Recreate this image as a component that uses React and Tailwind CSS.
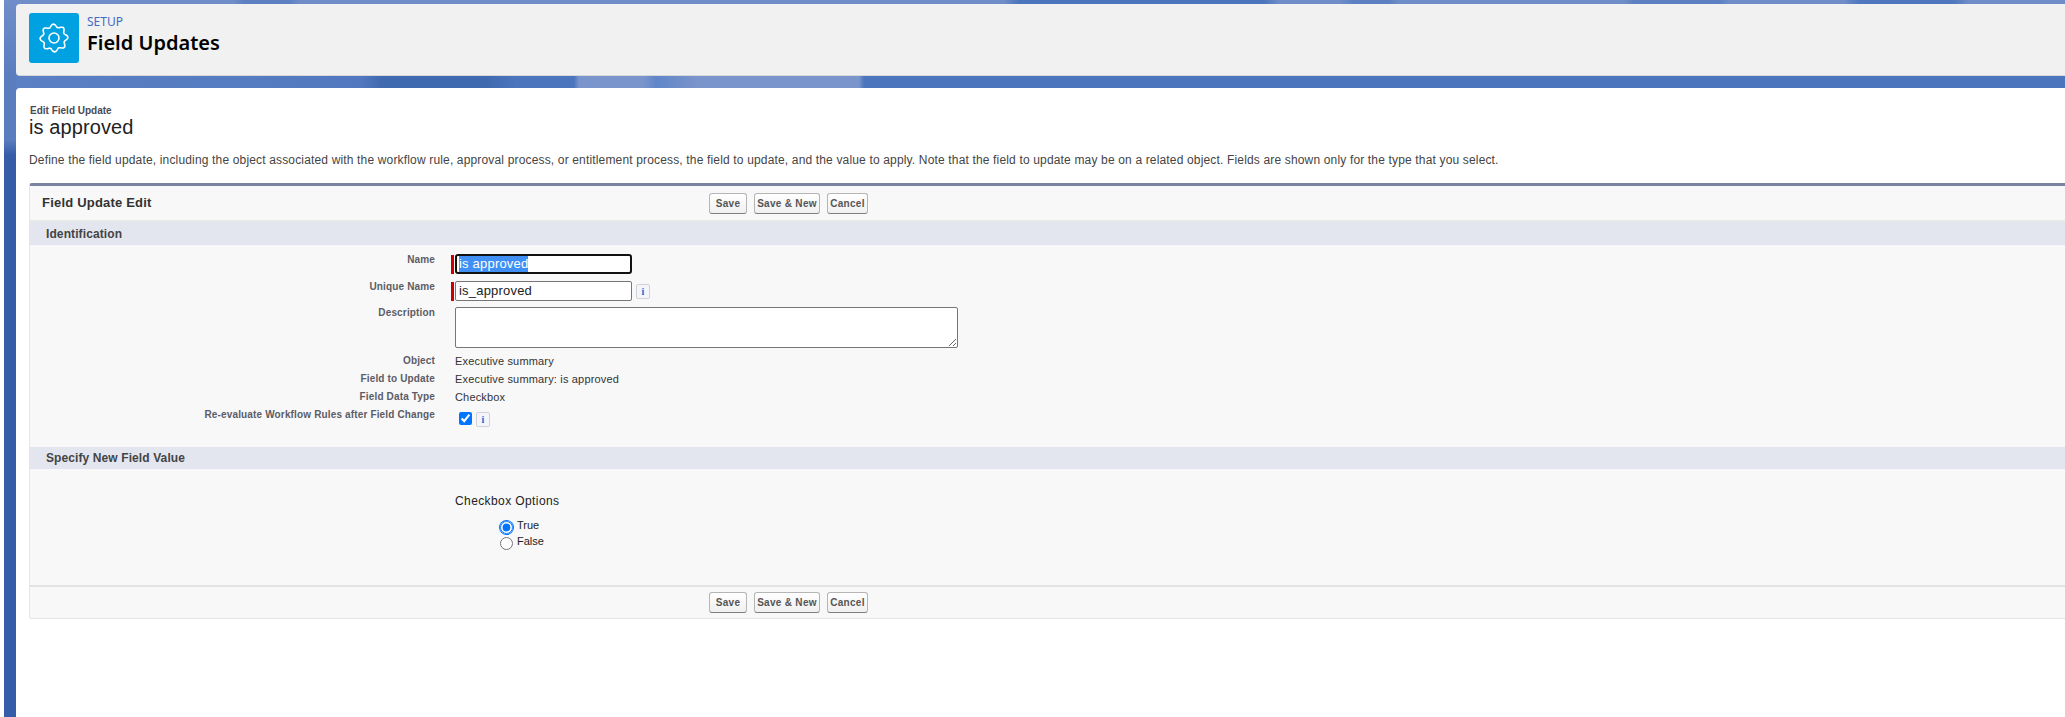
const gearPath = (() => {
  // 8 rounded teeth round the hub
  const pts = [];
  for (let i = 0; i < 160; i++) {
    const a = (i / 160) * Math.PI * 2;
    const r = 12.4 + 1.5 * Math.cos(8 * a + Math.PI / 8);
    pts.push(`${(25 + r * Math.cos(a)).toFixed(2)} ${(25 + r * Math.sin(a)).toFixed(2)}`);
  }
  return "M" + pts.join("L") + "Z";
})();

function GearTile() {
  return (
    <div className="w-[50px] h-[50px] rounded-[3px] bg-[#00a1e0] shrink-0">
      <svg viewBox="0 0 50 50" className="w-[50px] h-[50px]" fill="none" stroke="#fff" strokeWidth="1.6">
        <path d={gearPath} />
        <circle cx="25" cy="25" r="5" />
      </svg>
    </div>
  );
}

function InfoIcon() {
  return (
    <span className="flex items-center justify-center w-[14px] h-[15px] rounded-[2px] border border-[#cfd3d8] bg-[#f3f5f8] text-[#0a6fd8] text-[10px] font-bold font-['Liberation_Serif',serif] shrink-0">
      i
    </span>
  );
}

function Buttons() {
  return (
    <div className="flex gap-[7px] ml-[679px]">
      <Btn className="w-[38px]">Save</Btn>
      <Btn className="w-[66px]">Save &amp; New</Btn>
      <Btn className="w-[41px]">Cancel</Btn>
    </div>
  );
}

function Btn({ className, children }) {
  return (
    <button className={`h-[21px] rounded-[3px] border border-[#b5b5b5] border-b-[#7f7f7f] bg-gradient-to-b from-white to-[#f0f0f0] text-[10px] font-bold text-[#555] tracking-[0.3px] whitespace-nowrap ${className}`}>
      {children}
    </button>
  );
}

function Row({ label, className, children }) {
  return (
    <div className={`flex ${className}`}>
      <div className="w-[405px] text-right text-[10px] font-bold text-[#5c5c66] tracking-[0.15px] leading-[12px] shrink-0">
        {label}
      </div>
      {children}
    </div>
  );
}

function Required({ children }) {
  return (
    <div className="flex ml-[16px]">
      <div className="w-[3px] h-[19px] mt-[1px] bg-[#c00] mr-[1px]" />
      {children}
    </div>
  );
}

function ValueRow({ label, value }) {
  return (
    <Row label={label} className="h-[18px] items-center">
      <div className="ml-[20px] text-[11px] tracking-[0.17px] text-[#333]">{value}</div>
    </Row>
  );
}

function SectionBar({ className, children }) {
  return (
    <div className={`bg-[#e3e6ef] text-[12px] font-bold tracking-[0.1px] text-[#444] pl-[16px] flex items-center shrink-0 ${className}`}>
      {children}
    </div>
  );
}

export default function App() {
  return (
    <div className="min-h-[717px] bg-white pl-[4px] font-['Liberation_Sans',sans-serif]">
      <div className="min-h-[717px] pl-[12px] bg-[linear-gradient(180deg,#6f8dc8_0px,#5a7dc0_76px,#5a7dc0_140px,#365ca8_155px,#355ca8_100%)]">
        <div className="h-[4px] -ml-[12px] bg-[linear-gradient(90deg,#6f8dc8_0px,#6f8dc8_230px,#5c80c2_240px,#5c80c2_285px,#6f8dc8_295px,#6f8dc8_1000px,#4b76bd_1015px,#4b76bd_1260px,#6f8dc8_1275px,#6f8dc8_1335px,#5c80c2_1350px,#5c80c2_1385px,#6f8dc8_1395px,#6f8dc8_1620px,#5c80c2_1630px,#5c80c2_1715px,#6f8dc8_1725px,#6f8dc8_1840px,#5078be_1855px,#5078be_1950px,#6f8dc8_1965px)]" />
        <header className="h-[72px] rounded-tl-[4px] rounded-bl-[4px] bg-[#f1f1f1] border-b border-[#d8d8d8] flex items-start pl-[13px] pt-[9px]">
          <GearTile />
          <div className="ml-[8px]">
            <div className="text-[12px] leading-[14px] mt-[2px] text-[#3f6cc4] font-['Noto_Sans',sans-serif]">SETUP</div>
            <h1 className="text-[20px] leading-[26px] mt-[1px] font-semibold text-black font-['Noto_Sans',sans-serif]">Field Updates</h1>
          </div>
        </header>
        <div className="h-[12px] bg-[linear-gradient(90deg,#5b80c3_0px,#5279bf_345px,#3f6ab0_365px,#3f6ab0_470px,#4b76bd_500px,#4b76bd_558px,#7a94cc_563px,#7a94cc_628px,#5f86c8_640px,#7a94cc_680px,#7a94cc_843px,#4b76bd_848px)]" />

        <main className="min-h-[629px] bg-white rounded-tl-[4px] pt-[17px] pl-[13px]">
          <div className="pl-[1px] text-[10px] leading-[11px] font-bold text-[#4a4a56]">Edit Field Update</div>
          <h2 className="text-[20px] leading-[24px] tracking-[0.1px] text-[#222] mt-[-1px]">is approved</h2>
          <p className="mt-[13px] text-[12px] leading-[16px] tracking-[0.16px] text-[#444]">
            Define the field update, including the object associated with the workflow rule, approval process, or entitlement process, the field to update, and the value to apply. Note that the field to update may be on a related object. Fields are shown only for the type that you select.
          </p>

          <section className="mt-[15px] h-[436px] bg-[#f8f8f8] border-l border-b border-[#e6e6e6] border-t-[3px] border-t-[#7a84a0] rounded-tl-[3px] rounded-bl-[3px] flex flex-col">
            <div className="h-[36px] flex items-center border-b-2 border-[#e8e8e8] shrink-0 relative">
              <div className="absolute left-[12px] text-[13px] font-bold tracking-[0.2px] text-[#333]">Field Update Edit</div>
              <div className="mt-[1px]"><Buttons /></div>
            </div>
            <SectionBar className="h-[23px]">Identification</SectionBar>

            <div className="pt-[9px] shrink-0">
              <Row label="Name">
                <Required>
                  <div className="w-[177px] h-[20px] rounded-[3px] border-2 border-[#111] bg-white pl-[2px] flex items-center text-[13px] tracking-[0.2px]">
                    <span className="bg-[#3f8ff5] text-white leading-[16px]">is approved</span>
                  </div>
                </Required>
              </Row>
              <Row label="Unique Name" className="mt-[7px]">
                <Required>
                  <div className="w-[177px] h-[20px] rounded-[2px] border border-[#767676] bg-white pl-[3px] flex items-center text-[13px] tracking-[0.2px] text-[#222]">is_approved</div>
                  <div className="ml-[4px] mt-[3px]"><InfoIcon /></div>
                </Required>
              </Row>
              <Row label="Description" className="mt-[6px]">
                <textarea readOnly className="ml-[20px] w-[503px] h-[41px] rounded-[2px] border border-[#767676] bg-white block" />
              </Row>
              <div className="mt-[4px]">
                <ValueRow label="Object" value="Executive summary" />
                <ValueRow label="Field to Update" value="Executive summary: is approved" />
                <ValueRow label="Field Data Type" value="Checkbox" />
              </div>
              <Row label="Re-evaluate Workflow Rules after Field Change" className="mt-[3px]">
                <div className="ml-[24px] mt-[3px] flex items-start">
                  <input type="checkbox" defaultChecked className="w-[13px] h-[13px]" />
                  <div className="ml-[4px]"><InfoIcon /></div>
                </div>
              </Row>
            </div>

            <SectionBar className="h-[22px] mt-[20px]">Specify New Field Value</SectionBar>

            <div className="flex-1 pl-[425px] pt-[26px] text-[#222] text-[11px]">
              <div className="text-[12px] tracking-[0.4px] leading-[13px]">Checkbox Options</div>
              <div className="ml-[45px] mt-[11px] flex items-center h-[16px]">
                <span className="flex rounded-full ring-1 ring-[#0075ff]">
                  <input type="radio" name="val" defaultChecked className="w-[13px] h-[13px]" />
                </span>
                <span className="ml-[4px] -mt-[3px]">True</span>
              </div>
              <div className="ml-[45px] flex items-center h-[16px]">
                <input type="radio" name="val" className="w-[13px] h-[13px]" />
                <span className="ml-[4px] -mt-[3px]">False</span>
              </div>
            </div>

            <div className="h-[33px] border-t-2 border-[#e3e3e3] flex items-center shrink-0">
              <Buttons />
            </div>
          </section>
        </main>
      </div>
    </div>
  );
}
